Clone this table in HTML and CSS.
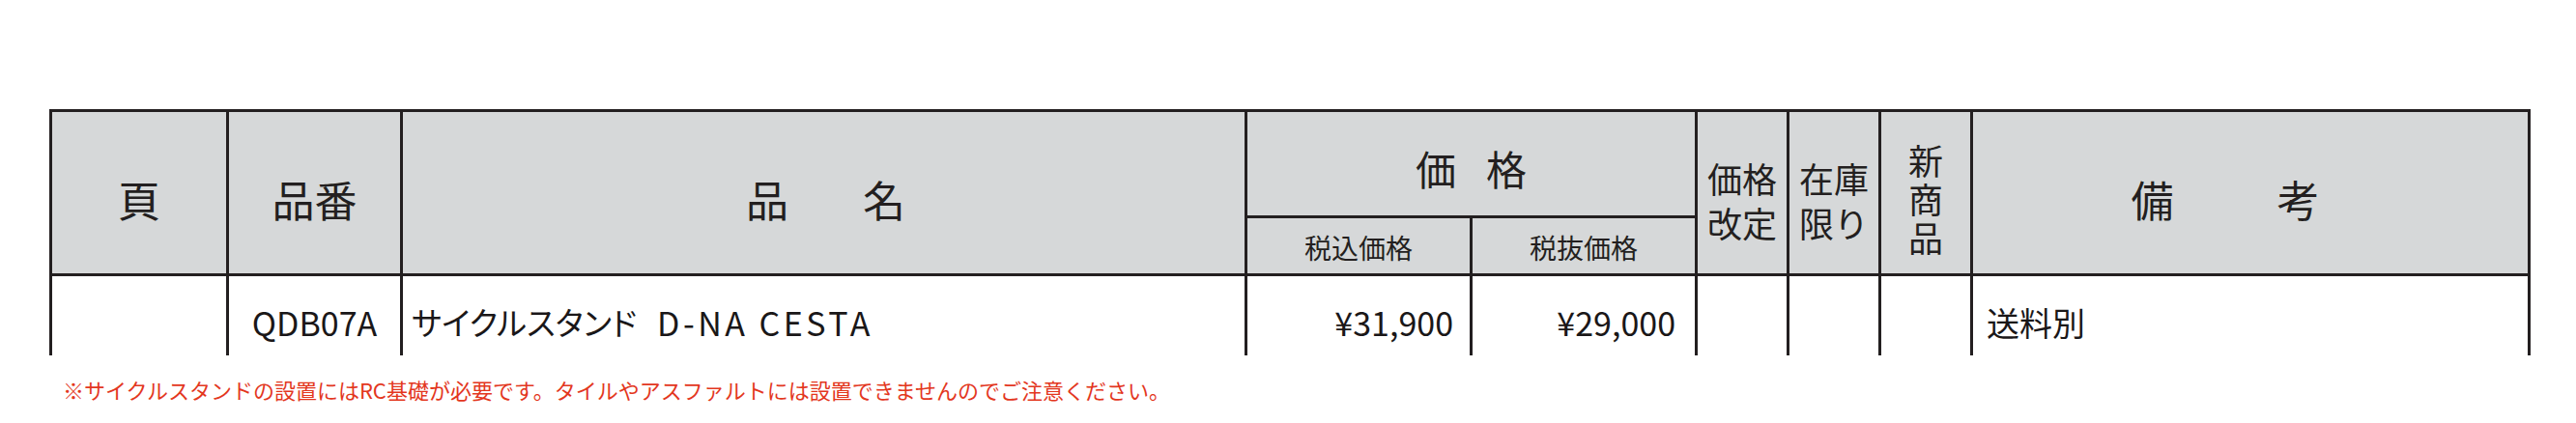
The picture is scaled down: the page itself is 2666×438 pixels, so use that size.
FILE: index.html
```html
<!DOCTYPE html>
<html lang="ja">
<head>
<meta charset="utf-8">
<title>価格表</title>
<link rel="stylesheet" href="styles.css">
</head>
<body>
<div class="sheet">
  <div class="clip">
    <div class="grid">
      <div class="cell head span2 h-big">頁</div>
      <div class="cell head span2 h-big">品番</div>
      <div class="cell head span2 h-big spaced name-h"><span>品</span><span>名</span></div>
      <div class="cell head price-h spaced"><span>価</span><span>格</span></div>
      <div class="cell head c4 sub">税込価格</div>
      <div class="cell head c5 sub">税抜価格</div>
      <div class="cell head span2 stack2"><span>価格</span><span>改定</span></div>
      <div class="cell head span2 stack2"><span>在庫</span><span>限り</span></div>
      <div class="cell head span2 stack3"><span>新</span><span>商</span><span>品</span></div>
      <div class="cell head span2 h-big spaced note-h"><span>備</span><span>考</span></div>

      <div class="cell body"></div>
      <div class="cell body center">QDB07A</div>
      <div class="cell body left name">サイクルスタンド<span class="gap"></span><span class="latin">D-NA CESTA</span></div>
      <div class="cell body right p1">¥31,900</div>
      <div class="cell body right p2">¥29,000</div>
      <div class="cell body"></div>
      <div class="cell body"></div>
      <div class="cell body"></div>
      <div class="cell body left remark">送料別</div>
    </div>
  </div>
  <p class="notice">※サイクルスタンドの設置にはRC基礎が必要です。タイルやアスファルトには設置できませんのでご注意ください。</p>
</div>
</body>
</html>
```

FILE: styles.css
```css
html, body {
  margin: 0;
  padding: 0;
  background: #ffffff;
}

body {
  font-family: "Noto Sans CJK JP", "Noto Sans", sans-serif;
  color: #231f20;
}

.sheet {
  padding-top: 113px;
  padding-left: 51px;
}

.clip {
  width: 2568px;
  height: 255px;
  overflow: hidden;
}

.grid {
  display: grid;
  grid-template-columns: 180px 177px 871px 230px 230px 92px 92px 92px 574px;
  grid-template-rows: 107px 57px 110px;
  gap: 3px;
  padding: 3px;
  background: #231f20;
  width: 2568px;
  box-sizing: border-box;
}

.cell {
  display: flex;
  align-items: center;
  justify-content: center;
  box-sizing: border-box;
}

.head {
  background: #d6d8d9;
  color: #231f20;
}

.body {
  background: #ffffff;
  color: #1a1718;
  font-size: 34px;
  line-height: 1.2;
  padding-bottom: 14px;
}

.span2 {
  grid-row: 1 / span 2;
}

.h-big {
  font-size: 44px;
  line-height: 1;
  padding-top: 12px;
}

.spaced span {
  display: block;
}

.name-h {
  gap: 77px;
  padding-left: 4px;
}

.note-h {
  gap: 107px;
  padding-right: 52px;
}

.price-h {
  grid-column: 4 / span 2;
  grid-row: 1;
  font-size: 42px;
  line-height: 1;
  gap: 31px;
  padding-top: 8px;
}

.c4 {
  grid-column: 4;
  grid-row: 2;
}

.c5 {
  grid-column: 5;
  grid-row: 2;
}

.sub {
  font-size: 28px;
  line-height: 1;
  padding-top: 2px;
}

.stack2 {
  flex-direction: column;
  font-size: 36px;
  line-height: 46px;
  padding-top: 14px;
}

.stack3 {
  flex-direction: column;
  font-size: 36px;
  line-height: 40px;
  padding-top: 10px;
}

.stack2 span,
.stack3 span {
  display: block;
}

.left {
  justify-content: flex-start;
}

.right {
  justify-content: flex-end;
}

.name {
  padding-left: 9px;
  font-size: 33px;
  font-feature-settings: "palt";
}

.name .gap {
  display: inline-block;
  width: 21px;
}

.name .latin {
  font-size: 34px;
  letter-spacing: 3.5px;
}

.p1 {
  padding-right: 17px;
}

.p2 {
  padding-right: 20px;
}

.remark {
  padding-left: 14px;
}

.notice {
  margin: 20px 0 0 14px;
  font-size: 22px;
  line-height: 30px;
  color: #e3371e;
}
```
